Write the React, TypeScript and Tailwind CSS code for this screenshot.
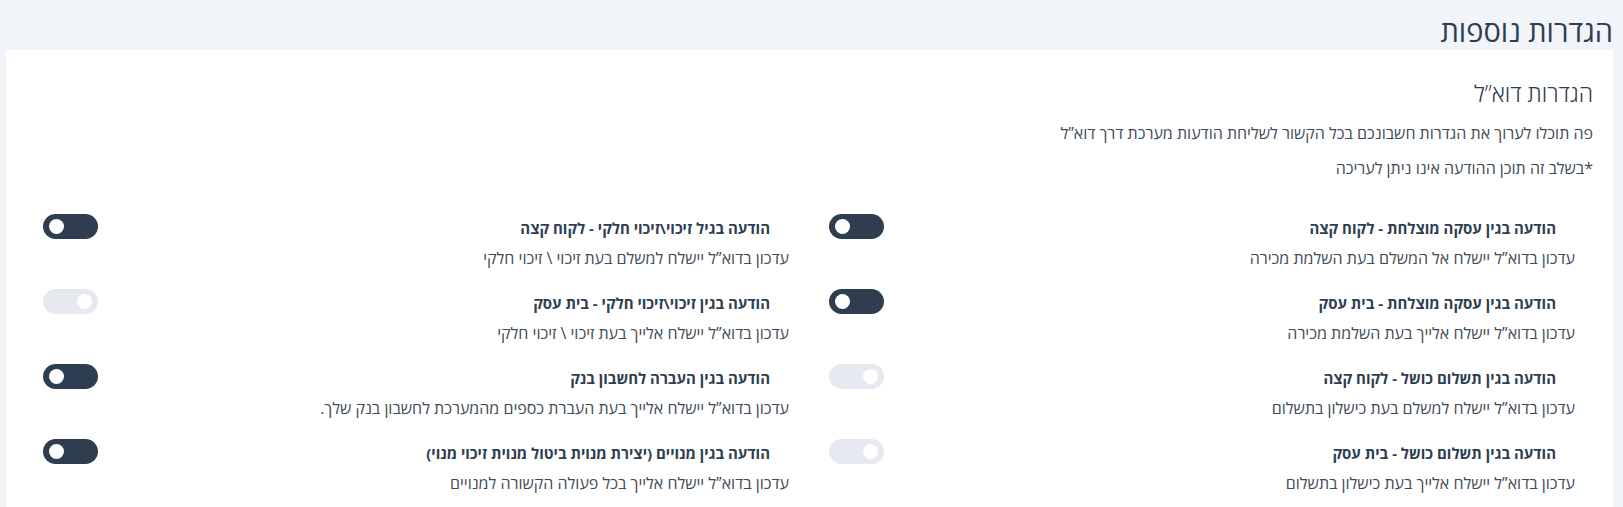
import type { ReactNode } from "react";

type Item = {
  title: string;
  desc: string;
  state: "dark" | "disabled";
};

const RIGHT: Item[] = [
  { title: "הודעה בגין עסקה מוצלחת - לקוח קצה", desc: "עדכון בדוא”ל יישלח אל המשלם בעת השלמת מכירה", state: "dark" },
  { title: "הודעה בגין עסקה מוצלחת - בית עסק", desc: "עדכון בדוא”ל יישלח אלייך בעת השלמת מכירה", state: "dark" },
  { title: "הודעה בגין תשלום כושל - לקוח קצה", desc: "עדכון בדוא”ל יישלח למשלם בעת כישלון בתשלום", state: "disabled" },
  { title: "הודעה בגין תשלום כושל - בית עסק", desc: "עדכון בדוא”ל יישלח אלייך בעת כישלון בתשלום", state: "disabled" },
];

const LEFT: Item[] = [
  { title: "הודעה בגיל זיכוי\\זיכוי חלקי - לקוח קצה", desc: "עדכון בדוא”ל יישלח למשלם בעת זיכוי \\ זיכוי חלקי", state: "dark" },
  { title: "הודעה בגין זיכוי\\זיכוי חלקי - בית עסק", desc: "עדכון בדוא”ל יישלח אלייך בעת זיכוי \\ זיכוי חלקי", state: "disabled" },
  { title: "הודעה בגין העברה לחשבון בנק", desc: "עדכון בדוא”ל יישלח אלייך בעת העברת כספים מהמערכת לחשבון בנק שלך.", state: "dark" },
  { title: "הודעה בגין מנויים (יצירת מנוית ביטול מנוית זיכוי מנוי)", desc: "עדכון בדוא”ל יישלח אלייך בכל פעולה הקשורה למנויים", state: "dark" },
];

function Toggle({ state }: { state: Item["state"] }) {
  if (state === "disabled") {
    return (
      <div className="flex h-[25px] w-[55px] shrink-0 items-center justify-end rounded-full bg-[#e6eaf0] px-[6px]" dir="ltr">
        <div className="h-[15px] w-[15px] rounded-full bg-white" />
      </div>
    );
  }
  return (
    <div className="flex h-[25px] w-[55px] shrink-0 items-center justify-start rounded-full bg-[#2e3e50] px-[6px]" dir="ltr">
      <div className="h-[15px] w-[15px] rounded-full bg-white" />
    </div>
  );
}

function Row({ item }: { item: Item }) {
  return (
    <div className="flex h-[75px] items-start justify-between">
      <div className="flex flex-col">
        <div className="pr-[19px] text-[15px] font-bold leading-[20px] text-[#2e3e50]">{item.title}</div>
        <div className="mt-[10px] text-[16px] leading-[20px] text-[#3f4b57]">{item.desc}</div>
      </div>
      <div className="-mt-[4px]">
        <Toggle state={item.state} />
      </div>
    </div>
  );
}

function Column({ items }: { items: Item[] }): ReactNode {
  return (
    <div className="flex flex-col">
      {items.map((it) => (
        <Row key={it.title} item={it} />
      ))}
    </div>
  );
}

export default function App() {
  return (
    <div
      dir="rtl"
      className="h-[507px] overflow-hidden bg-[#f1f4f8] pl-[6px] pr-[10px]"
      style={{ fontFamily: '"Open Sans", "Noto Sans", "Liberation Sans", sans-serif' }}
    >
      <h1 className="pt-[12px] text-[29px] leading-[38px] text-[#2e3e50]">הגדרות נוספות</h1>
      <div className="bg-white pb-[20px] pl-[37px] pr-[20px] pt-[28px]">
        <h2 className="text-[23px] leading-[30px] font-light text-[#2e3e50]">הגדרות דוא”ל</h2>
        <p className="mt-[14px] text-[16px] leading-[22px] text-[#3f4b57]">
          פה תוכלו לערוך את הגדרות חשבונכם בכל הקשור לשליחת הודעות מערכת דרך דוא”ל
        </p>
        <p className="mt-[13px] text-[16px] leading-[22px] text-[#3f4b57]">*בשלב זה תוכן ההודעה אינו ניתן לעריכה</p>
        <div className="mt-[39px] grid grid-cols-2 gap-x-[40px] pr-[18px]">
          <Column items={RIGHT} />
          <Column items={LEFT} />
        </div>
      </div>
    </div>
  );
}
